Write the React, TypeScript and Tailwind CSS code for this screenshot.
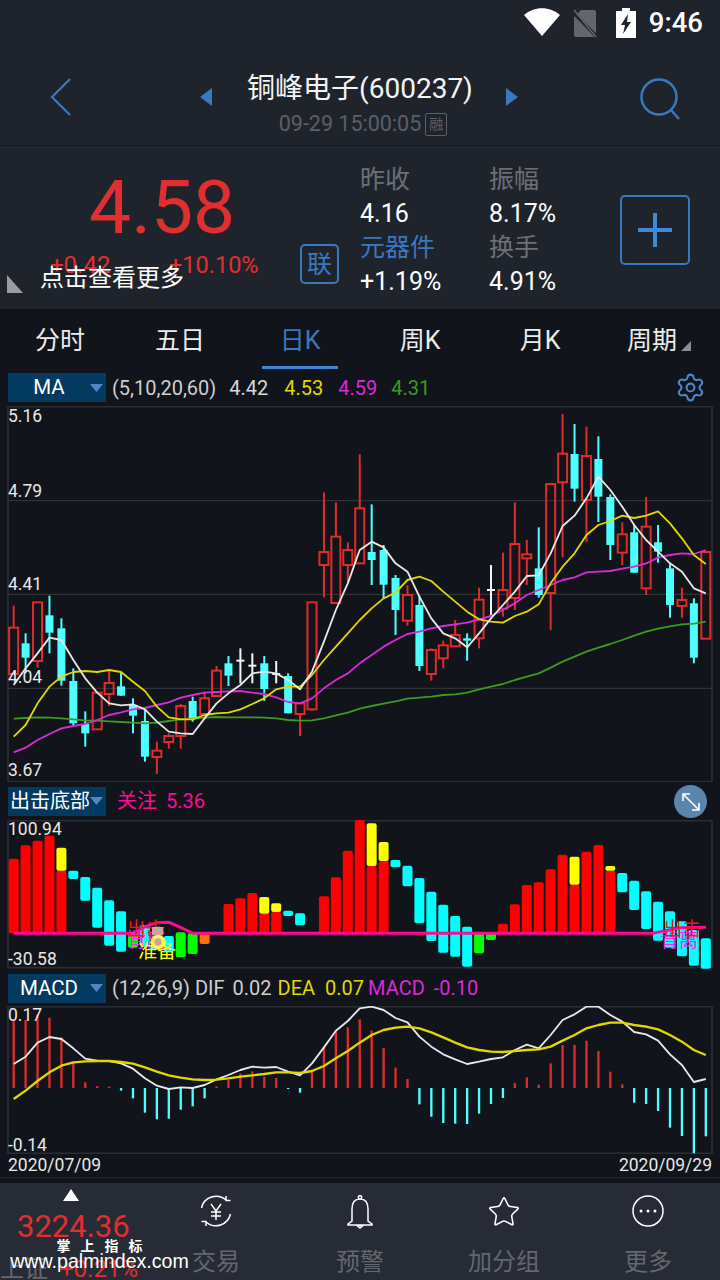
// Stock K-line detail screen: quote header, period tabs, three indicator panels, bottom bar.
// Chart data is in "3x" coordinates, so each svg viewBox is 2160 wide for a 720 wide page.
import { Settings, Star } from 'lucide-react';

type Kind = 'r' | 'c' | 'w';
type Candle = [number, number, number, number, Kind];

const RED = '#e02b2b';
const CYAN = '#4dffff';
const YELLOW = '#e0d800';
const MAGENTA = '#d92bd9';
const GREEN = '#3c9a1e';

const stepX = (i: number) => 41 + 35.8 * i;

const candles: Candle[] = [
  [707, 773, 912, 915, 'r'], [790, 820, 863, 910, 'c'], [697, 697, 873, 893, 'r'], [677, 736, 788, 850, 'c'],
  [745, 775, 932, 947, 'c'], [895, 933, 1060, 1065, 'c'], [1024, 1062, 1090, 1130, 'c'], [968, 968, 1078, 1078, 'r'],
  [900, 939, 972, 1008, 'r'], [905, 949, 977, 977, 'c'], [985, 1005, 1037, 1090, 'c'], [1015, 1053, 1160, 1175, 'c'],
  [1115, 1142, 1161, 1212, 'r'], [1090, 1098, 1116, 1136, 'r'], [1002, 1008, 1098, 1136, 'r'], [980, 993, 1045, 1055, 'c'],
  [965, 985, 1032, 1035, 'r'], [888, 902, 978, 980, 'r'], [858, 880, 917, 948, 'c'], [835, 872, 872, 940, 'w'],
  [850, 887, 887, 940, 'w'], [858, 880, 957, 993, 'c'], [873, 912, 912, 940, 'w'], [910, 918, 1030, 1030, 'c'],
  [1000, 1000, 1032, 1098, 'r'], [697, 697, 1018, 1022, 'r'], [367, 546, 585, 682, 'r'], [397, 500, 699, 699, 'r'],
  [517, 540, 585, 637, 'r'], [253, 415, 580, 580, 'r'], [403, 546, 570, 645, 'c'], [525, 540, 644, 685, 'c'],
  [615, 624, 720, 795, 'c'], [645, 675, 752, 767, 'r'], [677, 705, 888, 903, 'c'], [835, 840, 912, 932, 'r'],
  [812, 826, 865, 895, 'r'], [750, 795, 829, 829, 'r'], [790, 805, 812, 872, 'c'], [653, 689, 805, 835, 'r'],
  [585, 660, 660, 740, 'w'], [548, 660, 716, 740, 'r'], [397, 522, 684, 720, 'r'], [510, 553, 565, 645, 'r'],
  [472, 595, 675, 683, 'c'], [342, 342, 669, 780, 'r'], [132, 251, 337, 562, 'r'], [162, 252, 356, 395, 'c'],
  [170, 258, 390, 516, 'r'], [199, 267, 380, 456, 'c'], [373, 381, 525, 570, 'c'], [457, 493, 548, 585, 'r'],
  [465, 487, 608, 608, 'c'], [381, 470, 655, 675, 'r'], [465, 517, 545, 578, 'c'], [578, 595, 705, 743, 'c'],
  [653, 690, 708, 743, 'r'], [685, 700, 863, 880, 'c'], [546, 546, 806, 806, 'r'],
];

const ma5 = [945, 895, 850, 803, 810, 870, 925, 968, 1000, 1006, 1003, 1018, 1055, 1085, 1090, 1092, 1045, 1000, 970, 945, 910, 905, 910, 930, 958, 905, 815, 720, 640, 540, 515, 532, 580, 605, 680, 745, 790, 805, 832, 790, 745, 705, 665, 618, 616, 550, 468, 437, 385, 320, 360, 410, 465, 510, 545, 580, 605, 655, 670];
const ma10 = [1100, 1065, 1000, 950, 920, 906, 903, 906, 900, 906, 935, 963, 1010, 1042, 1048, 1048, 1035, 1030, 1028, 1018, 1002, 985, 958, 950, 950, 915, 870, 830, 790, 750, 715, 685, 668, 630, 620, 633, 665, 695, 725, 748, 755, 758, 738, 725, 703, 640, 590, 550, 495, 465, 453, 437, 444, 437, 424, 460, 505, 555, 582];
const ma20 = [1147, 1133, 1110, 1092, 1075, 1068, 1062, 1050, 1035, 1027, 1018, 1014, 1005, 997, 983, 975, 968, 966, 964, 963, 968, 972, 982, 996, 1000, 985, 955, 930, 910, 880, 855, 830, 810, 792, 785, 775, 768, 763, 758, 748, 738, 720, 700, 675, 660, 645, 630, 622, 607, 605, 603, 596, 590, 580, 563, 555, 550, 552, 540];
const ma60 = [1046, 1044, 1042, 1043, 1045, 1048, 1051, 1052, 1054, 1056, 1058, 1060, 1058, 1053, 1048, 1046, 1043, 1041, 1042, 1042, 1042, 1043, 1045, 1050, 1052, 1051, 1045, 1036, 1028, 1016, 1008, 1001, 994, 986, 983, 980, 975, 973, 968, 958, 950, 942, 930, 920, 910, 893, 875, 860, 845, 833, 822, 810, 797, 785, 776, 769, 763, 761, 755];

// index, top, bottom, colour
const bars: [number, number, number, string][] = [
  [0, 236, 460, '#ff0000'], [1, 196, 460, '#ff0000'], [2, 182, 460, '#ff0000'], [3, 167, 460, '#ff0000'],
  [4, 272, 460, '#ff0000'], [4, 203, 272, '#ffff00'], [5, 272, 297, '#00ffff'], [6, 291, 362, '#00ffff'],
  [7, 323, 443, '#00ffff'], [8, 361, 497, '#00ffff'], [9, 394, 515, '#00ffff'], [10, 460, 503, '#00ff00'],
  [11, 435, 500, '#00ffff'], [12, 440, 510, '#00ffff'], [13, 468, 515, '#00ffff'], [14, 457, 532, '#00ff00'],
  [15, 460, 522, '#00ff00'], [16, 460, 492, '#ff7000'], [18, 372, 460, '#ff0000'], [19, 355, 460, '#ff0000'],
  [20, 339, 460, '#ff0000'], [21, 401, 460, '#ff0000'], [21, 351, 401, '#ffff00'], [22, 396, 460, '#ff0000'],
  [22, 370, 396, '#ffff00'], [23, 392, 408, '#00ffff'], [24, 400, 436, '#00ffff'], [26, 349, 460, '#ff0000'],
  [27, 292, 460, '#ff0000'], [28, 212, 460, '#ff0000'], [29, 120, 460, '#ff0000'], [30, 258, 460, '#ff0000'],
  [30, 130, 258, '#ffff00'], [31, 243, 460, '#ff0000'], [31, 186, 243, '#ffff00'], [32, 240, 262, '#00ffff'],
  [33, 257, 319, '#00ffff'], [34, 294, 430, '#00ffff'], [35, 335, 483, '#00ffff'], [36, 374, 518, '#00ffff'],
  [37, 408, 530, '#00ffff'], [38, 440, 560, '#00ffff'], [39, 460, 520, '#00ff00'], [40, 460, 480, '#00ff00'],
  [41, 431, 460, '#ff0000'], [42, 373, 460, '#ff0000'], [43, 315, 460, '#ff0000'], [44, 307, 460, '#ff0000'],
  [45, 268, 460, '#ff0000'], [46, 224, 460, '#ff0000'], [47, 314, 460, '#ff0000'], [47, 230, 314, '#ffff00'],
  [48, 215, 460, '#ff0000'], [49, 195, 460, '#ff0000'], [50, 272, 460, '#ff0000'], [50, 258, 272, '#ffff00'],
  [51, 279, 337, '#00ffff'], [52, 302, 390, '#00ffff'], [53, 334, 447, '#00ffff'], [54, 365, 482, '#00ffff'],
  [55, 394, 503, '#00ffff'], [56, 424, 529, '#00ffff'], [57, 450, 557, '#00ffff'], [58, 475, 566, '#00ffff'],
];

const macdHist = [154, 150, 134, 143, 202, 275, 337, 348, 350, 362, 385, 428, 448, 446, 419, 409, 385, 349, 330, 311, 304, 320, 324, 357, 368, 305, 232, 183, 172, 148, 182, 234, 293, 327, 403, 440, 459, 461, 462, 431, 402, 384, 339, 322, 344, 280, 225, 225, 212, 243, 305, 343, 398, 402, 423, 473, 498, 550, 499];
const dif = [282, 260, 218, 201, 207, 235, 266, 272, 273, 280, 296, 325, 347, 357, 352, 354, 345, 328, 315, 300, 290, 293, 291, 305, 316, 280, 232, 182, 153, 115, 110, 120, 144, 157, 200, 230, 253, 268, 282, 275, 267, 262, 240, 224, 235, 195, 150, 133, 110, 110, 135, 155, 186, 193, 212, 253, 285, 336, 327];
const dea = [387, 362, 333, 307, 287, 277, 274, 273, 273, 276, 281, 292, 305, 316, 323, 328, 330, 329, 325, 320, 316, 312, 307, 307, 309, 303, 288, 265, 243, 218, 195, 180, 173, 170, 175, 187, 202, 218, 232, 240, 245, 246, 243, 240, 238, 230, 212, 195, 175, 165, 158, 158, 165, 170, 178, 195, 215, 240, 255];

function Line({ ys, color, width = 5.5 }: { ys: number[]; color: string; width?: number }) {
  return (
    <polyline
      points={ys.map((y, i) => `${stepX(i)},${y}`).join(' ')}
      fill="none"
      stroke={color}
      strokeWidth={width}
      strokeLinejoin="round"
    />
  );
}

function KChart() {
  return (
    <svg viewBox="0 108 2160 1128" className="block w-[720px] h-[376px]">
      <rect x="24" y="110" width="2112" height="1125" fill="none" stroke="#2a2e33" strokeWidth="5" />
      {[392, 673, 955].map((y) => (
        <line key={y} x1="24" x2="2136" y1={y} y2={y} stroke="#2f3337" strokeWidth="4" />
      ))}
      {candles.map(([high, top, bottom, low, kind], i) => {
        const x = stepX(i);
        if (kind === 'c') {
          return (
            <g key={i} fill={CYAN}>
              <rect x={x - 3} y={high} width="6" height={low - high} />
              <rect x={x - 12} y={top} width="24" height={bottom - top} />
            </g>
          );
        }
        if (kind === 'w') {
          return (
            <g key={i} fill="#f4f4f4">
              <rect x={x - 3} y={high} width="6" height={low - high} />
              <rect x={x - 12} y={top - 3} width="24" height="6" />
            </g>
          );
        }
        return (
          <g key={i}>
            <line x1={x} x2={x} y1={high} y2={top} stroke={RED} strokeWidth="6" />
            <line x1={x} x2={x} y1={bottom} y2={low} stroke={RED} strokeWidth="6" />
            <rect x={x - 13.5} y={top} width="27" height={bottom - top} fill="none" stroke={RED} strokeWidth="6" />
          </g>
        );
      })}
      <Line ys={ma60} color={GREEN} />
      <Line ys={ma20} color={MAGENTA} />
      <Line ys={ma10} color={YELLOW} />
      <Line ys={ma5} color="#e8e8e8" />
    </svg>
  );
}

function SignalChart() {
  return (
    <svg viewBox="0 120 2160 450" className="block w-[720px] h-[150px]">
      <rect x="24" y="122" width="2112" height="441" fill="none" stroke="#2a2e33" strokeWidth="5" />
      {bars.map(([i, top, bottom, color], k) => (
        <rect key={k} x={stepX(i) - 15} y={top} width="30" height={bottom - top} rx="6" fill={color} />
      ))}
      <polyline
        points="41,460 400,460 435,440 471,428 507,427 543,443 579,460 1960,460 2040,443 2118,442"
        fill="none"
        stroke="#ff0a94"
        strokeWidth="9"
      />
      <g fontSize="57">
        <text x="382" y="502" fill="#ff20ff">背离</text>
        <text x="380" y="468" fill="#ff1010">出击</text>
        <rect x="456" y="441" width="34" height="24" fill="#c9a49a" />
        <circle cx="474" cy="486" r="22" fill="#ffef60" />
        <circle cx="474" cy="486" r="11" fill="#c9a49a" />
        <text x="415" y="533" fill="#ffff00">准备</text>
        <text x="1980" y="500" fill="#ff20ff">背离</text>
        <text x="1990" y="468" fill="#ff1010">出击</text>
      </g>
    </svg>
  );
}

function MacdChart() {
  return (
    <svg viewBox="0 108 2160 444" className="block w-[720px] h-[148px]">
      <rect x="24" y="110" width="2112" height="440" fill="none" stroke="#2a2e33" strokeWidth="5" />
      {macdHist.map((y, i) => (
        <line key={i} x1={stepX(i)} x2={stepX(i)} y1="354" y2={y} stroke={y < 354 ? RED : CYAN} strokeWidth="7" />
      ))}
      <Line ys={dif} color="#e8e8e8" />
      <Line ys={dea} color={YELLOW} width={7} />
    </svg>
  );
}

function IndicatorSelect({ label, narrow }: { label: string; narrow?: boolean }) {
  return (
    <div className="w-[98px] h-[29px] bg-[#033a5f] flex items-center text-white shrink-0">
      <span className={narrow ? 'ml-[2px] text-[20px] leading-none whitespace-nowrap' : 'flex-1 text-center text-[20.5px] leading-none'}>{label}</span>
      <svg viewBox="0 0 13 8" className="w-[13px] h-[8px] mr-[3px] ml-auto shrink-0">
        <path d="M0 0h13L6.5 8z" fill="#5585c0" />
      </svg>
    </div>
  );
}

function Stat({ label, value, blue }: { label: string; value: string; blue?: boolean }) {
  return (
    <div className="flex flex-col h-[68px] justify-between">
      <span className={`text-[25px] leading-[34px] ${blue ? 'text-[#3a78c0]' : 'text-[#6c7076]'}`}>{label}</span>
      <span className="text-[25px] leading-[34px] text-white">{value}</span>
    </div>
  );
}

function Axis({ className, children }: { className: string; children: string }) {
  return <span className={`absolute left-[8px] text-[17.5px] leading-none text-[#e8e8e8] ${className}`}>{children}</span>;
}

function NavItem({ label, children }: { label: string; children: React.ReactNode }) {
  return (
    <div className="w-[144px] flex flex-col items-center">
      <div className="h-[63px] pt-[12px]">{children}</div>
      <span className="text-[24px] leading-[32px] text-[#63676e]">{label}</span>
    </div>
  );
}

export default function App() {
  return (
    <div className="relative w-[720px] h-[1280px] overflow-hidden bg-[#11141a] font-['Roboto','Noto_Sans_CJK_SC',sans-serif]">
      {/* status bar */}
      <div className="h-[46px] bg-[#1f242c] flex items-center justify-end pr-[17px]">
        <svg viewBox="0 0 36 28" className="w-[36px] h-[28px] mr-[13px] mt-[-2px]">
          <path d="M0 7C10-2 26-2 36 7L18 28z" fill="#fff" />
        </svg>
        <svg viewBox="0 0 24 29" className="w-[24px] h-[29px] mr-[19px]">
          <path d="M8 1h13a2 2 0 0 1 2 2v23a2 2 0 0 1-2 2H3a2 2 0 0 1-2-2V8z" fill="#63676c" />
          <path d="M0 3l24 25" stroke="#1f242c" strokeWidth="3.5" />
          <path d="M1 1l22 27" stroke="#63676c" strokeWidth="1.5" />
        </svg>
        <svg viewBox="0 0 20 30" className="w-[20px] h-[30px] mr-[13px]">
          <path d="M6 0h8v3h6v27H0V3h6z" fill="#fff" />
          <path d="M12 6L5 17h4l-2 9 8-12h-4z" fill="#1f242c" />
        </svg>
        <span className="text-[27.5px] leading-none font-medium text-white">9:46</span>
      </div>

      {/* title bar */}
      <div className="h-[100px] bg-[#1f242c] border-b border-[#14171c] flex items-start relative">
        <div className="w-[200px] h-full flex pl-[50px] pt-[32px]">
          <svg viewBox="0 0 21 38" className="w-[21px] h-[38px]">
            <path d="M20 1L2 19l18 18" fill="none" stroke="#3a78c0" strokeWidth="2.2" />
          </svg>
        </div>
        <svg viewBox="0 0 12 18" className="w-[12px] h-[18px] mt-[42px]">
          <path d="M12 0v18L0 9z" fill="#3a78c0" />
        </svg>
        <div className="w-[294px] flex flex-col items-center pt-[25px] pl-[2px]">
          <span className="text-[28px] leading-[36px] whitespace-nowrap text-[#f4f4f4]">铜峰电子(600237)</span>
          <div className="flex items-center mt-[5px] ml-[6px]">
            <span className="text-[21.5px] leading-[24px] whitespace-nowrap text-[#5b5f66]">09-29 15:00:05</span>
            <span className="ml-[4px] w-[22px] h-[23px] flex items-center justify-center border border-[#5b5f66] rounded-[2px] text-[14px] leading-none text-[#5b5f66]">融</span>
          </div>
        </div>
        <svg viewBox="0 0 12 18" className="w-[12px] h-[18px] mt-[42px]">
          <path d="M0 0v18l12-9z" fill="#3a78c0" />
        </svg>
        <svg viewBox="0 0 42 42" className="w-[42px] h-[42px] ml-[122px] mt-[32px]">
          <circle cx="19" cy="19" r="17.5" fill="none" stroke="#3a78c0" strokeWidth="2.5" />
          <path d="M31 32l8 9" stroke="#3a78c0" strokeWidth="2.5" />
        </svg>
      </div>

      {/* quote */}
      <div className="h-[163px] bg-[#1f242c] relative flex">
        <div className="w-[360px] relative">
          <span className="absolute left-[89px] top-[17px] text-[75px] leading-[88px] text-[#e12f2f]">4.58</span>
          <span className="absolute left-[50px] top-[103px] text-[24px] leading-[32px] text-[#e12f2f]">+0.42</span>
          <span className="absolute left-[169px] top-[103px] text-[23.5px] leading-[32px] text-[#e12f2f]">+10.10%</span>
          <svg viewBox="0 0 16 18" className="absolute left-[7px] top-[129px] w-[16px] h-[18px]">
            <path d="M0 0l16 18H0z" fill="#9a9ca0" />
          </svg>
          <span className="absolute left-[40px] top-[116px] text-[24px] leading-[32px] text-white">点击查看更多</span>
          <span className="absolute left-[300px] top-[98px] w-[39px] h-[40px] border-2 border-[#3a78c0] rounded-[5px] flex items-center justify-center text-[25px] leading-none text-[#3a78c0]">联</span>
        </div>
        <div className="w-[129px] pt-[17px] flex flex-col">
          <Stat label="昨收" value="4.16" />
          <Stat label="元器件" value="+1.19%" blue />
        </div>
        <div className="w-[131px] pt-[17px] flex flex-col">
          <Stat label="振幅" value="8.17%" />
          <Stat label="换手" value="4.91%" />
        </div>
        <div className="w-[70px] h-[70px] mt-[49px] border-2 border-[#3a78c0] rounded-[5px] flex items-center justify-center">
          <svg viewBox="0 0 34 34" className="w-[34px] h-[34px]">
            <path d="M17 1v32M1 17h32" stroke="#3f8ad8" strokeWidth="4" strokeLinecap="round" />
          </svg>
        </div>
      </div>

      {/* period tabs */}
      <div className="h-[58px] flex items-center relative text-[25px] leading-none text-[#ececec] pt-[4px]">
        <span className="w-[120px] text-center">分时</span>
        <span className="w-[120px] text-center">五日</span>
        <span className="w-[120px] text-center text-[#3a78c0] relative">
          日K
          <span className="absolute left-[22px] bottom-[-16px] w-[76px] h-[3px] bg-[#3f86d0]" />
        </span>
        <span className="w-[120px] text-center">周K</span>
        <span className="w-[120px] text-center">月K</span>
        <span className="ml-[27px] relative">
          周期
          <svg viewBox="0 0 10 10" className="absolute left-[54px] bottom-[2px] w-[10px] h-[10px]">
            <path d="M10 0v10H0z" fill="#8a8d92" />
          </svg>
        </span>
      </div>

      {/* MA panel */}
      <div className="h-[39px] flex items-center pl-[8px] pt-[2px] text-[20px] leading-none relative">
        <IndicatorSelect label="MA" />
        <span className="ml-[6px] text-[#cfcfcf]">(5,10,20,60)</span>
        <span className="ml-[13px] text-[#d8d8d8]">4.42</span>
        <span className="ml-[16px] text-[#e0d800]">4.53</span>
        <span className="ml-[15px] text-[#d92bd9]">4.59</span>
        <span className="ml-[14px] text-[#3c9a1e]">4.31</span>
        <Settings className="absolute left-[675px] top-[5px] w-[31px] h-[31px] text-[#4f86c6]" strokeWidth={1.6} />
      </div>
      <div className="relative h-[376px]">
        <KChart />
        <Axis className="top-[2px]">5.16</Axis>
        <Axis className="top-[77px]">4.79</Axis>
        <Axis className="top-[170px]">4.41</Axis>
        <Axis className="top-[263px]">4.04</Axis>
        <Axis className="top-[356px]">3.67</Axis>
      </div>

      {/* signal panel */}
      <div className="h-[38px] flex items-center pl-[8px] text-[20px] leading-none relative">
        <IndicatorSelect label="出击底部" narrow />
        <span className="ml-[11px] text-[#ff0a94]">关注</span>
        <span className="ml-[9px] text-[#ff0a94]">5.36</span>
        <div className="absolute left-[674px] top-[3px] w-[33px] h-[33px] rounded-full bg-[#5a86ab] flex items-center justify-center">
          <svg viewBox="0 0 20 20" className="w-[20px] h-[20px]">
            <path d="M2 2l16 16M2 9V2h7M18 11v7h-7" fill="none" stroke="#fff" strokeWidth="1.6" />
          </svg>
        </div>
      </div>
      <div className="relative h-[150px]">
        <SignalChart />
        <Axis className="top-[1px]">100.94</Axis>
        <Axis className="top-[131px]">-30.58</Axis>
      </div>

      {/* MACD panel */}
      <div className="h-[36px] flex items-center pl-[8px] text-[20px] leading-none">
        <IndicatorSelect label="MACD" />
        <span className="ml-[6px] text-[#cfcfcf]">(12,26,9)</span>
        <span className="ml-[5px] text-[#cfcfcf]">DIF</span>
        <span className="ml-[8px] text-[#cfcfcf]">0.02</span>
        <span className="ml-[6px] text-[#e0d800]">DEA</span>
        <span className="ml-[10px] text-[#e0d800]">0.07</span>
        <span className="ml-[4px] text-[#d92bd9]">MACD</span>
        <span className="ml-[9px] text-[#d92bd9]">-0.10</span>
      </div>
      <div className="relative h-[148px]">
        <MacdChart />
        <Axis className="top-[1px]">0.17</Axis>
        <Axis className="top-[131px]">-0.14</Axis>
      </div>

      {/* date range */}
      <div className="h-[24px] px-[8px] flex justify-between items-start text-[17.5px] leading-[22px] text-[#e8e8e8] border-b border-[#20283a]">
        <span>2020/07/09</span>
        <span>2020/09/29</span>
      </div>

      {/* bottom bar */}
      <div className="mt-[5px] h-[97px] bg-[#262b35] flex">
        <div className="w-[144px] relative">
          <svg viewBox="0 0 16 12" className="absolute left-[63px] top-[6px] w-[16px] h-[12px]">
            <path d="M8 0l8 12H0z" fill="#fff" />
          </svg>
          <span className="absolute left-[17px] top-[25px] text-[31px] leading-[38px] text-[#e12f2f]">3224.36</span>
          <span className="absolute left-0 top-[70px] text-[24px] leading-[32px] text-[#63676e]">上证</span>
          <span className="absolute left-[60px] top-[70px] text-[24px] leading-[32px] text-[#e12f2f]">+0.21%</span>
        </div>
        <NavItem label="交易">
          <svg viewBox="0 0 32 32" className="w-[32px] h-[32px]">
            <path d="M1.5 13A15 15 0 0 1 26 5M30.5 19A15 15 0 0 1 6 27" fill="none" stroke="#fff" strokeWidth="1.5" />
            <path d="M26 1v4.5h4.5M6 31v-4.5H1.5" fill="none" stroke="#fff" strokeWidth="1.5" />
            <path d="M11 9l5 7 5-7M16 16v9M11 17h10M11 21h10" fill="none" stroke="#fff" strokeWidth="1.5" />
          </svg>
        </NavItem>
        <NavItem label="预警">
          <svg viewBox="0 0 30 34" className="w-[30px] h-[34px]">
            <path d="M15 4c-6 0-8 5-8 10v12l-4 3v1h24v-1l-4-3V14c0-5-2-10-8-10zM15 4a1.7 1.7 0 1 1 0-3.4A1.7 1.7 0 0 1 15 4zM12 30.5h6L15 33z" fill="none" stroke="#fff" strokeWidth="1.5" />
          </svg>
        </NavItem>
        <NavItem label="加分组">
          <Star className="w-[36px] h-[34px] text-white" strokeWidth={1.1} />
        </NavItem>
        <NavItem label="更多">
          <svg viewBox="0 0 32 32" className="w-[32px] h-[32px]">
            <circle cx="16" cy="16" r="15" fill="none" stroke="#fff" strokeWidth="1.5" />
            <circle cx="9" cy="16" r="1.5" fill="#fff" />
            <circle cx="16" cy="16" r="1.5" fill="#fff" />
            <circle cx="23" cy="16" r="1.5" fill="#fff" />
          </svg>
        </NavItem>
      </div>

      {/* watermark */}
      <div className="absolute left-[8px] top-[1238px] w-[183px] flex flex-col items-center text-white">
        <span className="text-[14px] leading-[16px] font-bold tracking-[10px] ml-[10px] whitespace-nowrap">掌上指标</span>
        <span className="text-[19.6px] leading-[22px] mt-[-4px] font-['Liberation_Sans',sans-serif] whitespace-nowrap">www.palmindex.com</span>
      </div>
    </div>
  );
}
